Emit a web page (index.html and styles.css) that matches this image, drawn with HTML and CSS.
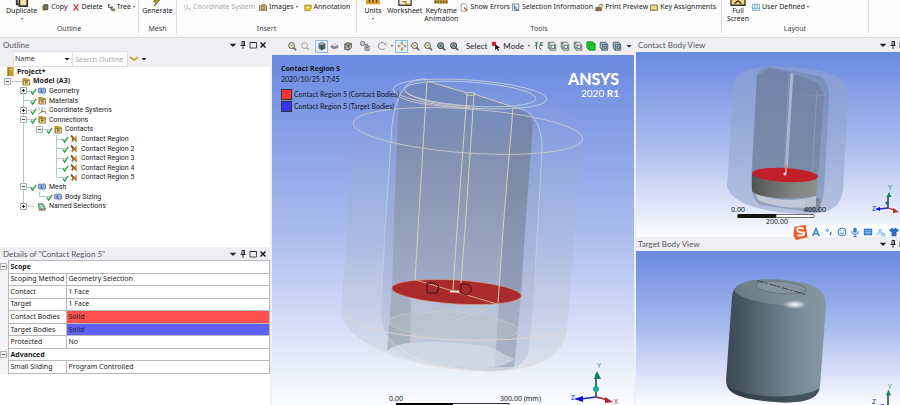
FILE: index.html
```html
<!DOCTYPE html>
<html lang="en">
<head>
<meta charset="utf-8">
<title>Mechanical - Contact Region 5</title>
<link rel="stylesheet" href="styles.css">
</head>
<body>
<svg class="defs" aria-hidden="true">
  <defs>
    <linearGradient id="steel" x1="0" x2="1" y1="0" y2="0">
      <stop offset="0" stop-color="#3a4953"/><stop offset=".3" stop-color="#52646f"/><stop offset=".7" stop-color="#778a97"/><stop offset="1" stop-color="#8798a4"/>
    </linearGradient>
    <linearGradient id="disc" x1="0" x2="1" y1="0" y2="0">
      <stop offset="0" stop-color="#4f5352"/><stop offset=".6" stop-color="#80827f"/><stop offset="1" stop-color="#8d8f8d"/>
    </linearGradient>
    <linearGradient id="core" x1="0" x2="0" y1="0" y2="1">
      <stop offset="0" stop-color="#6479ab" stop-opacity=".5"/><stop offset=".35" stop-color="#7f8ca3" stop-opacity=".75"/><stop offset="1" stop-color="#9fabc6" stop-opacity=".85"/>
    </linearGradient>
    <linearGradient id="shell" x1="0" x2="0" y1="0" y2="1">
      <stop offset="0" stop-color="#8a9ccf" stop-opacity=".05"/><stop offset=".3" stop-color="#98a8d2" stop-opacity=".35"/><stop offset=".6" stop-color="#acb9d6" stop-opacity=".5"/><stop offset="1" stop-color="#d8deea" stop-opacity=".8"/>
    </linearGradient>
    <radialGradient id="shine"><stop offset="0" stop-color="#fff"/><stop offset=".4" stop-color="#d5dfe6" stop-opacity=".8"/><stop offset="1" stop-color="#8fa0aa" stop-opacity="0"/></radialGradient>
  </defs>
  <symbol id="i-folder" viewBox="0 0 10 10"><path d="M1 3V1h4l1 1h3v7H1z" fill="#c09a3a"/><path d="M2 4h7v5H2z" fill="#ead08a" stroke="#7a6228" stroke-width=".7"/><path d="M5 4v4M4 6h3" stroke="#5e6a30"/></symbol>
  <symbol id="i-project" viewBox="0 0 10 10"><path d="M2 0h7v10H2z" fill="#c79c24"/><path d="M3 0v10" stroke="#8d6a13"/><path d="M5 3h3" stroke="#f2da85"/></symbol>
  <symbol id="i-cubes" viewBox="0 0 10 10"><path d="M1 3l2-1 2 1v4L3 8 1 7z" fill="#9fb4da" stroke="#3f588f" stroke-width=".7"/><path d="M4 3l3-1 2 1v4L7 9 4 7z" fill="#7e9bd0" stroke="#2f4a85" stroke-width=".7"/><path d="M4 3l3 1 2-1M7 4v5" fill="none" stroke="#e9effb" stroke-width=".6"/></symbol>
  <symbol id="i-axes" viewBox="0 0 10 10"><path d="M5 1v5L1 9" fill="none" stroke="#42a565"/><path d="M5 6h4v3" fill="none" stroke="#d65f58"/><circle cx="5" cy="6" r="1" fill="#2d8f50"/><path d="M2 2v2M8 2v2" stroke="#7bbb8a"/></symbol>
  <symbol id="i-contact" viewBox="0 0 10 10"><path d="M2 1l3 3-1 5-2-1 1-3-2-2z" fill="#916426"/><path d="M8 1v8L4 6z" fill="#c58c3a"/><path d="M2 1l6 8" stroke="#5b3b14" stroke-width=".7"/></symbol>
  <symbol id="i-named" viewBox="0 0 10 10"><path d="M1 2h5l3 6H2z" fill="#8ec5a4" stroke="#397c55"/><path d="M1 9h8" stroke="#c94c42"/><path d="M3 3l3 4" stroke="#fff"/></symbol>
  <symbol id="i-check" viewBox="0 0 8 8"><path d="M1 4l2 3 4-6" fill="none" stroke="#21a03a" stroke-width="1.5"/></symbol>
  <symbol id="i-plus" viewBox="0 0 7 7"><path d="M.5.5h6v6h-6z" fill="#fff" stroke="#8b8b8b" stroke-width=".8"/><path d="M2 3.5h3M3.5 2v3" stroke="#222"/></symbol>
  <symbol id="i-minus" viewBox="0 0 7 7"><path d="M.5.5h6v6h-6z" fill="#fff" stroke="#9b9b9b" stroke-width=".8"/><path d="M2 3.5h3" stroke="#444"/></symbol>
  <symbol id="i-down" viewBox="0 0 6 6"><path d="M.5 2h5L3 4.500z" fill="#222"/></symbol>
  <symbol id="i-pin" viewBox="0 0 8 8"><path d="M3 .5h2.500v4H3zM1.500 4.500h5M4 4.500V8" fill="none" stroke="#222" stroke-width=".9"/><path d="M5 .5v4" stroke="#222"/></symbol>
  <symbol id="i-max" viewBox="0 0 8 8"><path d="M1 1.500h6.500v5.500H1z" fill="none" stroke="#222" stroke-width=".8"/><path d="M1 1.500h6.500" stroke="#222"/></symbol>
  <symbol id="i-close" viewBox="0 0 8 8"><path d="M1.500 1.500l5 5M6.500 1.500l-5 5" stroke="#111" stroke-width="1.400"/></symbol>
  <symbol id="i-zoom" viewBox="0 0 12 12"><circle cx="5.500" cy="5.500" r="3.500" fill="#ece8cc" stroke="#555" stroke-width="1.200"/><path d="M8 8l3 3" stroke="#555" stroke-width="1.800"/><path d="M4 5.500h3" stroke="#917b2e"/></symbol>
  <symbol id="i-zoomfit" viewBox="0 0 12 12"><circle cx="5.500" cy="5.500" r="3.500" fill="#b9c8c4" stroke="#444" stroke-width="1.300"/><path d="M8 8l3 3" stroke="#444" stroke-width="1.800"/><path d="M4 4h3v3H4z" fill="#496c75"/></symbol>
  <symbol id="i-zoomoff" viewBox="0 0 12 12"><circle cx="5.500" cy="5.500" r="3.500" fill="#eee" stroke="#a5a5a5" stroke-width="1.200"/><path d="M8 8l3 3" stroke="#a5a5a5" stroke-width="1.500"/></symbol>
  <symbol id="i-cube" viewBox="0 0 12 12"><path d="M2 3l4-2 4 2v6l-4 2-4-2z" fill="#4d5f6b"/><path d="M2 3l4 2 4-2-4-2z" fill="#9aa9b3"/><path d="M6 5v6" stroke="#2d3a44"/></symbol>
  <symbol id="i-flat" viewBox="0 0 12 12"><path d="M1 5l5-2 4 2v3l-5 2-4-2z" fill="#85858c"/><path d="M1 5l5-2 4 2-5 1.500z" fill="#d7d7dc"/></symbol>
  <symbol id="i-wire" viewBox="0 0 12 12"><path d="M2 4l3-2 5 1v5l-3 3-5-1z" fill="#bcbcaf" stroke="#4b4b4b"/><path d="M2 4l5 1 3-2M7 5v6M3 8l6-4" fill="none" stroke="#4b4b4b"/></symbol>
  <symbol id="i-boxes" viewBox="0 0 12 12"><path d="M1 1h4v4H1zM6 6h5v5H6zM5 4h4v2" fill="none" stroke="#555"/><path d="M7 8h3M8.500 7v3" stroke="#555"/></symbol>
  <symbol id="i-rotate" viewBox="0 0 12 12"><path d="M9 9A4.300 4.300 0 1 1 10 4.500" fill="none" stroke="#888" stroke-width="1.200"/><path d="M8.500 4.500h2.500V2" fill="none" stroke="#999" stroke-width=".8"/></symbol>
  <symbol id="i-pan" viewBox="0 0 12 12"><path d="M6 1v10M1 6h10" stroke="#b98b24" stroke-width="1.300" stroke-dasharray="3.500 3"/><path d="M4.500 3L6 1l1.500 2M4.500 9L6 11l1.500-2M3 4.500L1 6l2 1.500M9 4.500L11 6 9 7.500" fill="none" stroke="#8e7334" stroke-width=".8"/></symbol>
  <symbol id="i-mode" viewBox="0 0 12 12"><path d="M1 1h5v5H1z" fill="#d8213b"/><path d="M5 4l6 4-3 .5 2 3-1.500.5-1.500-3-2 2z" fill="#111"/></symbol>
  <symbol id="i-pick" viewBox="0 0 12 12"><path d="M1 2h4M7 2h4M1 5h3M6 5h5M3 2v8M8 2v4" stroke="#3e7651" stroke-width="1.300"/><path d="M6 7l3 4" stroke="#333"/></symbol>
  <symbol id="i-body" viewBox="0 0 12 12"><path d="M1.500 3V1.500H8L10.500 4v7h-7V3z" fill="#e3eee4" stroke="#50645a"/><path d="M1.500 3v5.500h2M5 5h4v4H5z" fill="none" stroke="#50645a"/></symbol>
  <symbol id="i-bodyg" viewBox="0 0 12 12"><path d="M1 1h7l3 3v7H4L1 8z" fill="#1bd029" stroke="#247c2e"/><path d="M4 4h7M4 4v7" stroke="#159921"/></symbol>
  <symbol id="i-bodyb" viewBox="0 0 12 12"><path d="M1.500 1.500H8L10.500 4v7h-7L1.500 8z" fill="#a8c3df" stroke="#3b4f68"/><path d="M3.500 4h7M4 4v7M6 6h3v3H6z" fill="none" stroke="#345b55"/></symbol>
</svg>

<header class="ribbon">
  <section class="group">
    <div class="tools">
      <button class="big"><svg viewBox="0 0 20 8"><path d="M4 0v5h3M7 0v7h9V0" fill="#f8e59b" stroke="#333" stroke-width="2"/></svg>Duplicate<i class="caret"></i></button>
      <button class="small"><svg viewBox="0 0 10 10"><path d="M1 3h6v6H1z" fill="#d7b94d"/><path d="M3.500 1.500h5v6h-5z" fill="#777" stroke="#333"/></svg>Copy</button>
      <button class="small"><svg viewBox="0 0 10 10"><path d="M2 1l6 8M8 1L2 9" stroke="#d9382c" stroke-width="1.600"/></svg>Delete</button>
      <button class="small"><svg viewBox="0 0 10 10"><path d="M2 1v4h3v3h4M1 2h3" fill="none" stroke="#333"/><path d="M5 4h2v2H5zM7 7h3v2H7z" fill="#a59743" stroke="#333" stroke-width=".5"/></svg>Tree<i class="caret"></i></button>
    </div>
    <h2>Outline</h2>
  </section>
  <section class="group">
    <div class="tools center"><button class="big"><svg viewBox="0 0 20 8"><path d="M13 0L7 7l2-5H6l1-2z" fill="#d2a92a" stroke="#826516"/></svg>Generate</button></div>
    <h2>Mesh</h2>
  </section>
  <section class="group">
    <div class="tools">
      <button class="small off" disabled><svg viewBox="0 0 10 10"><path d="M5 1v5L1 9M5 6h4v3M2 2v3" fill="none" stroke="#b5b5b5"/></svg>Coordinate System</button>
      <button class="small"><svg viewBox="0 0 10 10"><path d="M.5 3h2l1-1.500h4V3H9.500v5.500h-9z" fill="#d9c07a" stroke="#6b5a2a"/><circle cx="5" cy="5.500" r="1.700" fill="#fff" stroke="#444"/></svg>Images<i class="caret"></i></button>
      <button class="small"><svg viewBox="0 0 10 10"><path d="M1 2h8v5L7 9H1z" fill="#e8c53a" stroke="#a17d12"/><path d="M3 5h4" stroke="#fff"/></svg>Annotation</button>
    </div>
    <h2>Insert</h2>
  </section>
  <section class="group dense">
    <div class="tools">
      <button class="big narrow"><svg viewBox="0 0 20 8"><path d="M2 0h16v5H2z" fill="#dba726"/><path d="M6 0v3M10 0v3M14 0v3" stroke="#5b410c" stroke-width="1.500"/></svg>Units<i class="caret"></i></button>
      <button class="big"><svg viewBox="0 0 20 8"><path d="M3 0v6h14V0" fill="#f4efd8" stroke="#444" stroke-width="1.500"/><path d="M7 2h4v3h5" fill="none" stroke="#b78a22" stroke-width="1.500"/></svg>Worksheet</button>
      <button class="big"><svg viewBox="0 0 20 8"><path d="M2 0h16v4H2z" fill="#b89a40"/><path d="M4 1v3M7 1v3M10 1v3M13 1v3M16 1v3" stroke="#4d3f17"/></svg>Keyframe<br>Animation</button>
      <button class="small"><svg viewBox="0 0 10 10"><path d="M1.500.5h5l2 2v7h-7z" fill="#fff" stroke="#888"/><path d="M5 5l4 4" stroke="#ad4c34" stroke-width="1.500"/></svg>Show Errors</button>
      <button class="small"><svg viewBox="0 0 10 10"><path d="M.5.5h8v8h-8z" fill="#e8f1fb" stroke="#4f78a8"/><path d="M3 2v5M5 4v4h3" fill="none" stroke="#345"/></svg>Selection Information</button>
      <button class="small"><svg viewBox="0 0 10 10"><path d="M1 5h7v4H1z" fill="#8a7a3c" stroke="#333" stroke-width=".7"/><path d="M4 4l2-3h3v4" fill="#f4e7b5" stroke="#333" stroke-width=".7"/></svg>Print Preview</button>
      <button class="small"><svg viewBox="0 0 10 10"><path d="M.5 2h9v6.500h-9z" fill="#e7c66a" stroke="#755a1e"/><path d="M2 4h6M2 6h6" stroke="#fff1c1"/></svg>Key Assignments</button>
    </div>
    <h2>Tools</h2>
  </section>
  <section class="group dense">
    <div class="tools">
      <button class="big narrow"><svg viewBox="0 0 20 8"><path d="M2 0v6h16V0" fill="#f4d67a" stroke="#333" stroke-width="1.500"/><path d="M6 4l4-3 4 3" fill="none" stroke="#333" stroke-width="1.500"/></svg>Full<br>Screen</button>
      <button class="small"><svg viewBox="0 0 10 10"><path d="M.5 1h9v7.500h-9zM.5 6h9M3.500 1v7M6.500 1v5" fill="#fff" stroke="#5b9cd3"/></svg>User Defined<i class="caret"></i></button>
    </div>
    <h2>Layout</h2>
  </section>
</header>

<main class="workspace">
  <div class="column side">
    <section class="outline">
      <header class="titlebar"><h3>Outline</h3><span class="ctl"><svg><use href="#i-down"/></svg><svg><use href="#i-pin"/></svg><svg><use href="#i-max"/></svg><svg><use href="#i-close"/></svg></span></header>
      <form class="filter">
        <span class="pick"><select aria-label="Filter by"><option>Name</option></select><svg><use href="#i-down"/></svg></span>
        <input type="text" aria-label="Search Outline" placeholder="Search Outline">
        <svg class="chev" viewBox="0 0 10 8"><path d="M1 2l4 3 4-3" fill="none" stroke="#c9ab45" stroke-width="2"/></svg><svg class="tick"><use href="#i-down"/></svg>
      </form>
      <div class="treebox">
        <svg class="guides" viewBox="0 0 80 144"><path d="M7.500 14.500H22M23.500 20V134.500M23.500 24.500H34M23.500 33.500H34M23.500 43.500H34M23.500 52.500H34M40 62.500H50M56.500 68V110.500M56.500 72.500H66M56.500 81.500H66M56.500 91.500H66M56.500 101.500H66M56.500 110.500H66M23.500 120.500H34M39.500 125V129.500H50M23.500 139.500H34M23.500 130V139" fill="none" stroke="#c4c4c4"/></svg>
        <ul class="tree">
          <li class="l0"><svg class="ico"><use href="#i-project"/></svg><b>Project*</b></li>
          <li class="l1"><svg class="exp"><use href="#i-minus"/></svg><svg class="ico"><use href="#i-folder"/></svg><b>Model (A3)</b></li>
          <li class="l2"><svg class="exp"><use href="#i-plus"/></svg><svg class="chk"><use href="#i-check"/></svg><svg class="ico"><use href="#i-cubes"/></svg>Geometry</li>
          <li class="l2"><span class="exp"></span><svg class="chk"><use href="#i-check"/></svg><svg class="ico"><use href="#i-folder"/></svg>Materials</li>
          <li class="l2"><svg class="exp"><use href="#i-plus"/></svg><svg class="chk"><use href="#i-check"/></svg><svg class="ico"><use href="#i-axes"/></svg>Coordinate Systems</li>
          <li class="l2"><svg class="exp"><use href="#i-minus"/></svg><svg class="chk"><use href="#i-check"/></svg><svg class="ico"><use href="#i-folder"/></svg>Connections</li>
          <li class="l3"><svg class="exp"><use href="#i-minus"/></svg><svg class="chk"><use href="#i-check"/></svg><svg class="ico"><use href="#i-folder"/></svg>Contacts</li>
          <li class="l4"><span class="exp"></span><svg class="chk"><use href="#i-check"/></svg><svg class="ico"><use href="#i-contact"/></svg>Contact Region</li>
          <li class="l4"><span class="exp"></span><svg class="chk"><use href="#i-check"/></svg><svg class="ico"><use href="#i-contact"/></svg>Contact Region 2</li>
          <li class="l4"><span class="exp"></span><svg class="chk"><use href="#i-check"/></svg><svg class="ico"><use href="#i-contact"/></svg>Contact Region 3</li>
          <li class="l4"><span class="exp"></span><svg class="chk"><use href="#i-check"/></svg><svg class="ico"><use href="#i-contact"/></svg>Contact Region 4</li>
          <li class="l4"><span class="exp"></span><svg class="chk"><use href="#i-check"/></svg><svg class="ico"><use href="#i-contact"/></svg>Contact Region 5</li>
          <li class="l2"><svg class="exp"><use href="#i-minus"/></svg><svg class="chk"><use href="#i-check"/></svg><svg class="ico"><use href="#i-cubes"/></svg>Mesh</li>
          <li class="l3"><span class="exp"></span><svg class="chk"><use href="#i-check"/></svg><svg class="ico"><use href="#i-cubes"/></svg>Body Sizing</li>
          <li class="l2"><svg class="exp"><use href="#i-plus"/></svg><span class="chk"></span><svg class="ico"><use href="#i-named"/></svg>Named Selections</li>
        </ul>
      </div>
    </section>
    <section class="details">
      <header class="titlebar"><h3>Details of "Contact Region 5"</h3><span class="ctl"><svg><use href="#i-down"/></svg><svg><use href="#i-pin"/></svg><svg><use href="#i-max"/></svg><svg><use href="#i-close"/></svg></span></header>
      <table>
        <colgroup><col class="c-exp"><col class="c-name"><col></colgroup>
        <tr><td class="x"><svg class="exp"><use href="#i-minus"/></svg></td><th colspan="2">Scope</th></tr>
        <tr><td class="x"></td><td>Scoping Method</td><td>Geometry Selection</td></tr>
        <tr><td class="x"></td><td>Contact</td><td>1 Face</td></tr>
        <tr><td class="x"></td><td>Target</td><td>1 Face</td></tr>
        <tr><td class="x"></td><td>Contact Bodies</td><td class="red">Solid</td></tr>
        <tr><td class="x"></td><td>Target Bodies</td><td class="blue">Solid</td></tr>
        <tr><td class="x"></td><td>Protected</td><td>No</td></tr>
        <tr><td class="x"><svg class="exp"><use href="#i-minus"/></svg></td><th colspan="2">Advanced</th></tr>
        <tr><td class="x"></td><td>Small Sliding</td><td>Program Controlled</td></tr>
      </table>
    </section>
  </div>

  <div class="column middle">
    <nav class="toolbar" aria-label="Graphics">
      <button aria-label="Zoom out"><svg><use href="#i-zoom"/></svg></button>
      <button aria-label="Zoom previous"><svg><use href="#i-zoomoff"/></svg></button>
      <button class="on gap" aria-label="Shaded"><svg><use href="#i-cube"/></svg></button>
      <button aria-label="Flat"><svg><use href="#i-flat"/></svg></button>
      <button aria-label="Wireframe"><svg><use href="#i-wire"/></svg></button>
      <button class="gap" aria-label="Viewports"><svg><use href="#i-boxes"/></svg></button>
      <button class="gap" aria-label="Rotate"><svg><use href="#i-rotate"/></svg></button>
      <i class="caret"></i>
      <button class="on" aria-label="Pan"><svg><use href="#i-pan"/></svg></button>
      <button aria-label="Zoom"><svg><use href="#i-zoom"/></svg></button>
      <button aria-label="Box zoom"><svg><use href="#i-zoom"/></svg></button>
      <button aria-label="Zoom to fit"><svg><use href="#i-zoomfit"/></svg></button>
      <button aria-label="Magnifier"><svg><use href="#i-zoomfit"/></svg></button>
      <span class="label">Select</span>
      <button class="mode"><svg><use href="#i-mode"/></svg>Mode<i class="caret"></i></button>
      <span class="picks">
        <button aria-label="Pick"><svg><use href="#i-pick"/></svg></button>
        <button aria-label="Vertex"><svg><use href="#i-body"/></svg></button>
        <button aria-label="Edge"><svg><use href="#i-body"/></svg></button>
        <button aria-label="Face"><svg><use href="#i-body"/></svg></button>
        <button aria-label="Body"><svg><use href="#i-bodyg"/></svg></button>
        <button aria-label="Node"><svg><use href="#i-bodyb"/></svg></button>
        <button aria-label="Element"><svg><use href="#i-bodyb"/></svg></button>
      </span>
      <svg class="tick"><use href="#i-down"/></svg>
    </nav>
    <div class="view">
      <svg class="scene" viewBox="272 55 362 350" preserveAspectRatio="xMidYMid slice">
        <path d="M353 122C362 98 398 80 420 79C500 76 580 98 583 140L575 230 567 330C562 362 530 371 485 371C410 368 343 345 341 310L347 230z" fill="url(#shell)"/>
        <path d="M391 140C393 96 405 79 427 79L513 107C536 110 542 128 542 150L538 220 533 310 528 350C525 368 510 371 485 371C420 366 381 350 381 310L385 230z" fill="#8694b8" opacity=".2"/>
        <path d="M399 98Q408 82 427 81L513 106Q530 108 533 122L525 230 521 296 392 288 395 190z" fill="url(#core)"/>
        <path d="M392 288L521 296 514 367 Q450 372 388 350z" fill="#bcc5d2" opacity=".45"/>
        <path d="M392 288L411 300 410 343Q395 344 387 351z" fill="#8e9ba3" opacity=".5"/>
        <path d="M513 107L533 122 525 230 521 296 514 367 495 367 499 303 503 230z" fill="#6a7891" opacity=".3"/>
        <ellipse cx="454" cy="326" rx="65" ry="13" transform="rotate(4 454 326)" fill="#b6c3c6" fill-opacity=".35" stroke="#c2cccd" stroke-width=".7"/>
        <path d="M388 350C400 339 450 341 490 347L514 359C500 376 420 366 388 350z" fill="#dbe0eb" opacity=".6"/>
        <g fill="none" stroke="#c6cdd2" stroke-width="1"><path d="M449 318l30-11M452 321l36-12M478 308l8 7M416 315q30-8 50-2"/></g>
        <g fill="none" stroke="#c0cfdc" stroke-width=".9">
          <path d="M427 79C405 77 393 95 391 140L385 230 381 310C383 335 393 350 415 360"/>
          <path d="M513 107C536 110 542 128 542 150L538 220 533 310 528 350C525 366 510 371 485 371" />
          <ellipse cx="470" cy="94" rx="77" ry="14" transform="rotate(4 470 94)"/>
          <ellipse cx="470" cy="94" rx="66" ry="12" transform="rotate(4 470 94)"/>
        </g>
        <g fill="none" stroke="#d8c5bb" stroke-width=".9">
          <path d="M394 91C397 103 440 107 470 108M405 91Q418 104 470 106"/>
          <ellipse cx="468" cy="131" rx="115" ry="22" transform="rotate(4 468 131)" stroke="#c6c8cc"/>
        </g>
        <path d="M341 312C348 334 480 352 567 331" fill="none" stroke="#e3d6ce" stroke-width=".9"/>
        <path d="M343 330C360 352 430 370 485 371C540 371 562 355 567 330" fill="none" stroke="#e9ddda" stroke-width=".9"/>
        <ellipse cx="456.500" cy="292" rx="65" ry="12" transform="rotate(3.500 456.500 292)" fill="#aa2b2c" stroke="#d3a093" stroke-width=".7"/>
        <path d="M416 280L497 304" stroke="#dca67c"/>
        <path d="M427 283h8l4 4-2 6h-10zM461 284h6q5 2 4 7l-4 4-6-2z" fill="none" stroke="#3c0d10" stroke-width="1"/>
        <path d="M450 291.500h9" stroke="#eee2de" stroke-width="2"/>
        <g fill="none" stroke="#d2d3b3" stroke-width="1"><path d="M427 81L418 230 415 280M467 94L457 230 453 290M474 94L465 230 461 283M513 108L503 230 498 303M427 81L467 93M474 94L513 107"/><ellipse cx="470.500" cy="94" rx="5" ry="1.500"/></g>
        <path d="M396 403h57v3h-57z" fill="#000"/><path d="M453 403.500h56v2" fill="none" stroke="#333"/>
        <text x="389" y="401" class="t7">0.00</text><text x="500" y="401" class="t7">300.00 (mm)</text>
        <path d="M596 397V374" stroke="#143f34" stroke-width="1.500"/><path d="M597 371l4 8h-7z" fill="#0b8050"/><circle cx="596" cy="389" r="3" fill="#19a6a6"/><path d="M596 397l-15 2" stroke="#1b2ab4" stroke-width="1.500"/><path d="M574 399l9-3v6z" fill="#0c0cd0"/><path d="M596 397l12 3" stroke="#9c2b22" stroke-width="1.500"/><path d="M613 402l-8-5v6z" fill="#b8201e"/>
        <text x="597" y="368" class="t7 green">Y</text><text x="571" y="400" class="t7 zblue">Z</text><text x="614" y="404" class="t7 xred">X</text>
      </svg>
      <div class="legend"><b>Contact Region 5</b><span class="date">2020/10/25 17:45</span>
        <span class="key"><i class="kr"></i>Contact Region 5 (Contact Bodies)</span><span class="key"><i class="kb"></i>Contact Region 5 (Target Bodies)</span></div>
      <div class="brand"><b>ANSYS</b><span>2020 <strong>R1</strong></span></div>
    </div>
  </div>

  <div class="column bodies">
    <section class="pane upper">
      <header class="titlebar"><h3>Contact Body View</h3><span class="ctl cut"><svg><use href="#i-down"/></svg><svg><use href="#i-pin"/></svg><svg><use href="#i-max"/></svg></span></header>
      <div class="view">
        <svg class="scene" viewBox="636 52 264 185" preserveAspectRatio="xMidYMid slice">
          <path d="M735 80C740 68 760 66 785 67C830 68 850 78 848 100L843 190C840 210 828 214 800 214C755 212 728 200 727 185L731 130z" fill="#93a4cb" opacity=".58"/>
          <path d="M757 75Q760 67 770 67L820 76Q830 82 829 100L824 190Q822 207 816 213L760 205Q750 198 751 180z" fill="#6d7f9f" opacity=".45"/>
          <path d="M757 76L770 68 791 73 818 83 824 95 818 178 752 175z" fill="#65758f" opacity=".45"/>
          <path d="M792 73l-6 100" stroke="#aab6d1" stroke-width="3"/><path d="M807 95h20M789 74L784 173M817 90l-5 85" stroke="#91a1bd" stroke-width=".7"/>
          <path d="M806 198h14v14h-17z" fill="#6b7688" opacity=".55"/>
          <path d="M752 174v17C757 198 790 201 816 196L818 177z" fill="url(#disc)"/>
          <path d="M756 194Q785 205 816 196L816 207Q780 210 758 200z" fill="#d5d9e1" opacity=".7"/>
          <ellipse cx="785" cy="175" rx="33" ry="7" transform="rotate(3 785 175)" fill="#c22029"/>
          <path d="M786 165v8" stroke="#da8a8d" stroke-width="2"/><circle cx="785" cy="174" r="1.500" fill="#e9d3d3"/>
          <path d="M737.500 214h38.500v4h-38.500z" fill="#151515"/><path d="M776 214.500h38v3h-38z" fill="#fff" stroke="#333" stroke-width=".7"/>
          <text x="731" y="212" class="t7">0.00</text><text x="804" y="212" class="t7">400.00</text><text x="766" y="224" class="t7">200.00</text>
          <path d="M888 208V196" stroke="#164a3e" stroke-width="1.500"/><path d="M889 192l2.500 5h-5z" fill="#0b8a4a"/><circle cx="887" cy="203" r="1.500" fill="#168"/><path d="M888 208l-9 1" stroke="#1c2bb0" stroke-width="1.300"/><path d="M875 209l5-2v4z" fill="#11c"/><path d="M888 208l7 2" stroke="#a02018" stroke-width="1.300"/><path d="M899 212l-6-4v5z" fill="#cc2420"/>
          <text x="888" y="190" class="t7 green">Y</text><text x="872" y="211" class="t7 zblue">Z</text>
        </svg>
        <div class="ime">
          <svg viewBox="0 0 18 18" class="logo"><path d="M3 3l12-2 2 13L5 17 2 13z" fill="#ef5a24"/><path d="M13 5q-7-2-7 1t7 3q2 4-7 3" fill="none" stroke="#fff" stroke-width="2"/></svg>
          <svg viewBox="0 0 12 12"><path d="M2 11L6 2l4 9M3.500 8h5" fill="none" stroke="#2f7fd0" stroke-width="1.700"/></svg>
          <svg viewBox="0 0 12 12"><circle cx="4" cy="4" r="1.300" fill="none" stroke="#2f7fd0"/><path d="M8 6q1 2-1 4" fill="none" stroke="#2f7fd0" stroke-width="1.500"/></svg>
          <svg viewBox="0 0 12 12"><circle cx="6" cy="6" r="4.800" fill="none" stroke="#2f7fd0" stroke-width="1.200"/><path d="M3.500 7q2.500 3 5 0M4 4v1M8 4v1" fill="none" stroke="#2f7fd0" stroke-width="1.200"/></svg>
          <svg viewBox="0 0 12 12"><rect x="4" y="1" width="4" height="6" rx="2" fill="#2f7fd0"/><path d="M2 5q0 4 4 4t4-4M6 9v3M4 11.500h4" fill="none" stroke="#2f7fd0" stroke-width="1.200"/></svg>
          <svg viewBox="0 0 12 12"><rect x="1" y="2" width="10" height="8" fill="#2f7fd0"/><path d="M2.500 4.500h7M2.500 6.500h7M4 8.500h4" stroke="#cfe4fa" stroke-dasharray="1.500 .5"/></svg>
          <svg viewBox="0 0 12 12"><circle cx="5" cy="4" r="2" fill="#aac7e6"/><path d="M1 10q0-4 4-4t5 4M7 8h4v3H7z" fill="#d7e6f5" stroke="#9bbcdf"/></svg>
          <svg viewBox="0 0 12 12"><path d="M4 1l2 1.500L8 1l4 3-2 2-1-.5V11H3V5.500L2 6 0 4z" fill="#2872c4"/></svg>
        </div>
      </div>
    </section>
    <section class="pane lower">
      <header class="titlebar"><h3>Target Body View</h3><span class="ctl cut"><svg><use href="#i-down"/></svg><svg><use href="#i-pin"/></svg><svg><use href="#i-max"/></svg></span></header>
      <div class="view">
        <svg class="scene" viewBox="636 250 264 155" preserveAspectRatio="xMidYMid slice">
          <path d="M732 296C733 284 745 279 768 279C800 279 826 285 826 305L820 386C819 398 806 402 784 402C750 400 726 396 726 380z" fill="url(#steel)"/>
          <path d="M734 290C740 280 755 279 768 279C800 279 822 284 825 297C820 310 745 306 734 290z" fill="#83949d" opacity=".65"/>
          <path d="M727 384C740 398 800 400 819 388C818 398 806 402 784 402C750 400 728 396 727 384z" fill="#26343c" opacity=".65"/>
          <ellipse cx="781" cy="287" rx="25" ry="6" transform="rotate(5 781 287)" fill="#83949e" stroke="#5b6b74" stroke-width=".7"/>
          <path d="M757 280L806 294" stroke="#303c43" stroke-width=".9" stroke-dasharray="7 1 3 2"/>
          <ellipse cx="795" cy="304" rx="14" ry="5" fill="url(#shine)"/>
          <path d="M888 405V394" stroke="#164a3e" stroke-width="1.500"/><path d="M888.500 389l2.500 6h-5z" fill="#0b8a4a"/><path d="M879 405l5-1" stroke="#22c"/>
          <text x="888" y="388" class="t7 green">Y</text><text x="872" y="403" class="t7 zblue">Z</text>
        </svg>
      </div>
    </section>
  </div>
</main>
</body>
</html>
```
FILE: styles.css
```css
* { box-sizing: border-box; }
html, body { height: 100%; margin: 0; }
body {
  display: flex; flex-direction: column; overflow: hidden;
  background: #eeeef3; color: #222;
  font: 7px/8px "Noto Sans", "Open Sans", sans-serif;
}
h2, h3 { margin: 0; font-size: 7px; line-height: 8px; font-weight: 400; }
button { font: inherit; color: inherit; background: none; border: 0; padding: 0; margin: 0; white-space: nowrap; }
svg { display: block; flex: none; }
.defs { position: absolute; width: 0; height: 0; }
.caret { display: inline-block; border: 1px solid transparent; border-top: 2px solid #444; border-bottom: 0; margin-left: 2px; }

/* Ribbon */
.ribbon {
  display: grid; flex: none;
  grid-template-columns: 139fr 38fr 180fr 365fr 147fr 31fr;
  height: 38px; padding-bottom: 3px;
  background: #fcfcfd; border-bottom: 1px solid #d9d9df;
}
.group { display: flex; flex-direction: column; border-right: 1px solid #dcdce0; min-width: 0; }
.tools { display: flex; align-items: flex-start; flex: 1; gap: 4px; padding-left: 6px; }
.tools.center { justify-content: center; padding: 0; }
.dense .tools { gap: 2px; padding-left: 4px; }
.group h2 { text-align: center; padding-bottom: 1px; height: 9px; color: #444; }
.big { display: flex; flex-direction: column; align-items: center; line-height: 8px; text-align: center; }
.big svg { width: 20px; height: 7px; }
.big .caret { margin: 3px 0 0; }
.big.narrow { min-width: 24px; }
.small { display: flex; align-items: center; height: 14px; gap: 2px; }
.small svg { width: 8px; height: 9px; }
.small .caret { margin: 0 2px 0 0; }
.off { color: #a9a9ad; }

/* Workspace */
.workspace { flex: 1; min-height: 0; display: grid; grid-template-columns: 270fr 363fr 265fr; column-gap: 1px; }
.column { display: flex; flex-direction: column; min-width: 0; min-height: 0; }
.titlebar { display: flex; align-items: center; justify-content: space-between; flex: none; height: 13px; padding: 0 3px; background: #eeeef3; color: #55555c; }
.titlebar h3 { font: 8px/12px Lato, sans-serif; }
.ctl { display: flex; gap: 2px; align-items: center; }
.ctl svg { width: 8px; height: 8px; }
.ctl.cut { margin-right: -10px; }
.filter { display: flex; align-items: center; height: 16px; padding: 1px 0 1px 14px; }
.filter select, .filter input {
  height: 14px; margin: 0; border: 0; border-radius: 0; background: #fff; font: inherit; color: #333; outline: 1px solid #dedee4;
}
.pick { display: grid; align-items: center; width: 58px; }
.pick > * { grid-area: 1 / 1; }
.pick svg { width: 6px; height: 6px; justify-self: end; margin-right: 2px; pointer-events: none; }
.filter select { width: 100%; padding: 0 0 0 1px; appearance: none; }
.filter input { width: 54px; padding: 0 1px 0 2px; margin-left: 1px; }
.filter input::placeholder { color: #a7a7ad; opacity: 1; }
.chev { width: 10px; height: 8px; margin-left: 2px; }
.tick { width: 6px; height: 6px; margin-left: 2px; }
.outline { flex: 1; display: flex; flex-direction: column; }
.treebox { position: relative; flex: 1; background: #fff; }
.guides { position: absolute; left: 0; top: 0; width: 80px; height: 144px; }
.tree { position: relative; display: grid; grid-auto-rows: 1fr; height: 144px; margin: 0; padding: 0; list-style: none; font-family: Roboto, sans-serif; }
.tree b { font-family: "Noto Sans", sans-serif; }
.tree li { display: flex; align-items: center; white-space: nowrap; }
.ico { width: 10px; height: 9px; margin-right: 2px; }
.exp { width: 7px; height: 7px; flex: none; }
.tree .exp { margin-right: 3px; }
.chk { width: 7px; height: 7px; margin: 2px 0 0; flex: none; }
.l0 { padding-left: 5px; }
.l1 { padding-left: 4px; }
.l1 .exp + .ico { margin-left: 7px; }
.l2 { padding-left: 20px; }
.l3 { padding-left: 36px; }
.l4 { padding-left: 52px; }

/* Details */
.details { height: 158px; background: #fff; }
table { width: 100%; height: 114px; table-layout: fixed; border-collapse: collapse; }
.c-exp { width: 8px; }
.c-name { width: 58px; }
td, th { padding: 0 0 0 2px; border: 1px solid #b9b9b9; text-align: left; white-space: nowrap; line-height: 8px; }
td.x { padding: 0; border: 0; background: #f4f4f6; }
.red { background: #ff4f4f; }
.blue { background: #6060ff; }

/* Graphics toolbar */
.toolbar { display: flex; align-items: center; flex: none; height: 17px; padding: 0 0 1px 14px; }
.toolbar button { display: flex; align-items: center; justify-content: center; width: 13px; height: 13px; }
.toolbar button svg { width: 10px; height: 10px; }
.toolbar .gap { margin-left: 4px; }
.toolbar > .caret { margin: 0 2px 0 3px; }
.toolbar .on { outline: 1px solid #8cbce6; outline-offset: -1px; background: #e4eff9; }
.toolbar .label { margin: 0 4px 0 6px; font-size: 8px; }
.toolbar .mode { width: auto; gap: 2px; font: 8px/10px Lato, sans-serif; }
.toolbar .label { font-family: Lato, sans-serif; }
.picks { display: flex; margin-left: auto; }
.toolbar .tick { margin: 0 2px 0 3px; }

/* 3D views */
.view { position: relative; flex: 1; min-height: 0; margin-left: 1px; background: linear-gradient(#6a8ae0, #a9bbee 50%, #fbfcff); overflow: hidden; }
.scene { width: 100%; height: 100%; }
.t7 { font: 7px "Noto Sans", sans-serif; fill: #222; }
.green { fill: #2b9b6b; }
.zblue { fill: #2030c0; }
.xred { fill: #c03030; }
.legend { position: absolute; left: 9px; top: 9px; display: flex; flex-direction: column; color: #101525; line-height: 10px; font-family: Lato, sans-serif; }
.legend b { font-family: "Noto Sans", sans-serif; }
.date { margin-bottom: 4px; }
.key { display: flex; align-items: center; gap: 2px; height: 12px; }
.key i { width: 11px; height: 11px; border: 1px solid #333; }
.kr { background: #ff3333; }
.kb { background: #3333f0; }
.brand { position: absolute; right: 15px; top: 15px; color: #fff; text-align: right; font: 10px/12px Lato, sans-serif; }
.brand b { display: block; font: 900 16px/17px Lato, sans-serif; }
.bodies .titlebar { height: 14px; }
.upper { flex: 199; display: flex; flex-direction: column; min-height: 0; }
.lower { flex: 168; display: flex; flex-direction: column; min-height: 0; }
.upper .view { overflow: visible; }
.ime { position: absolute; right: 0; bottom: -4px; display: flex; align-items: center; gap: 1px; height: 17px; z-index: 1; background: linear-gradient(#f8fafd 13px, transparent 13px); }
.ime svg { width: 12px; height: 10px; margin-bottom: 1px; }
.ime .logo { width: 18px; height: 17px; margin: 0; }
```
